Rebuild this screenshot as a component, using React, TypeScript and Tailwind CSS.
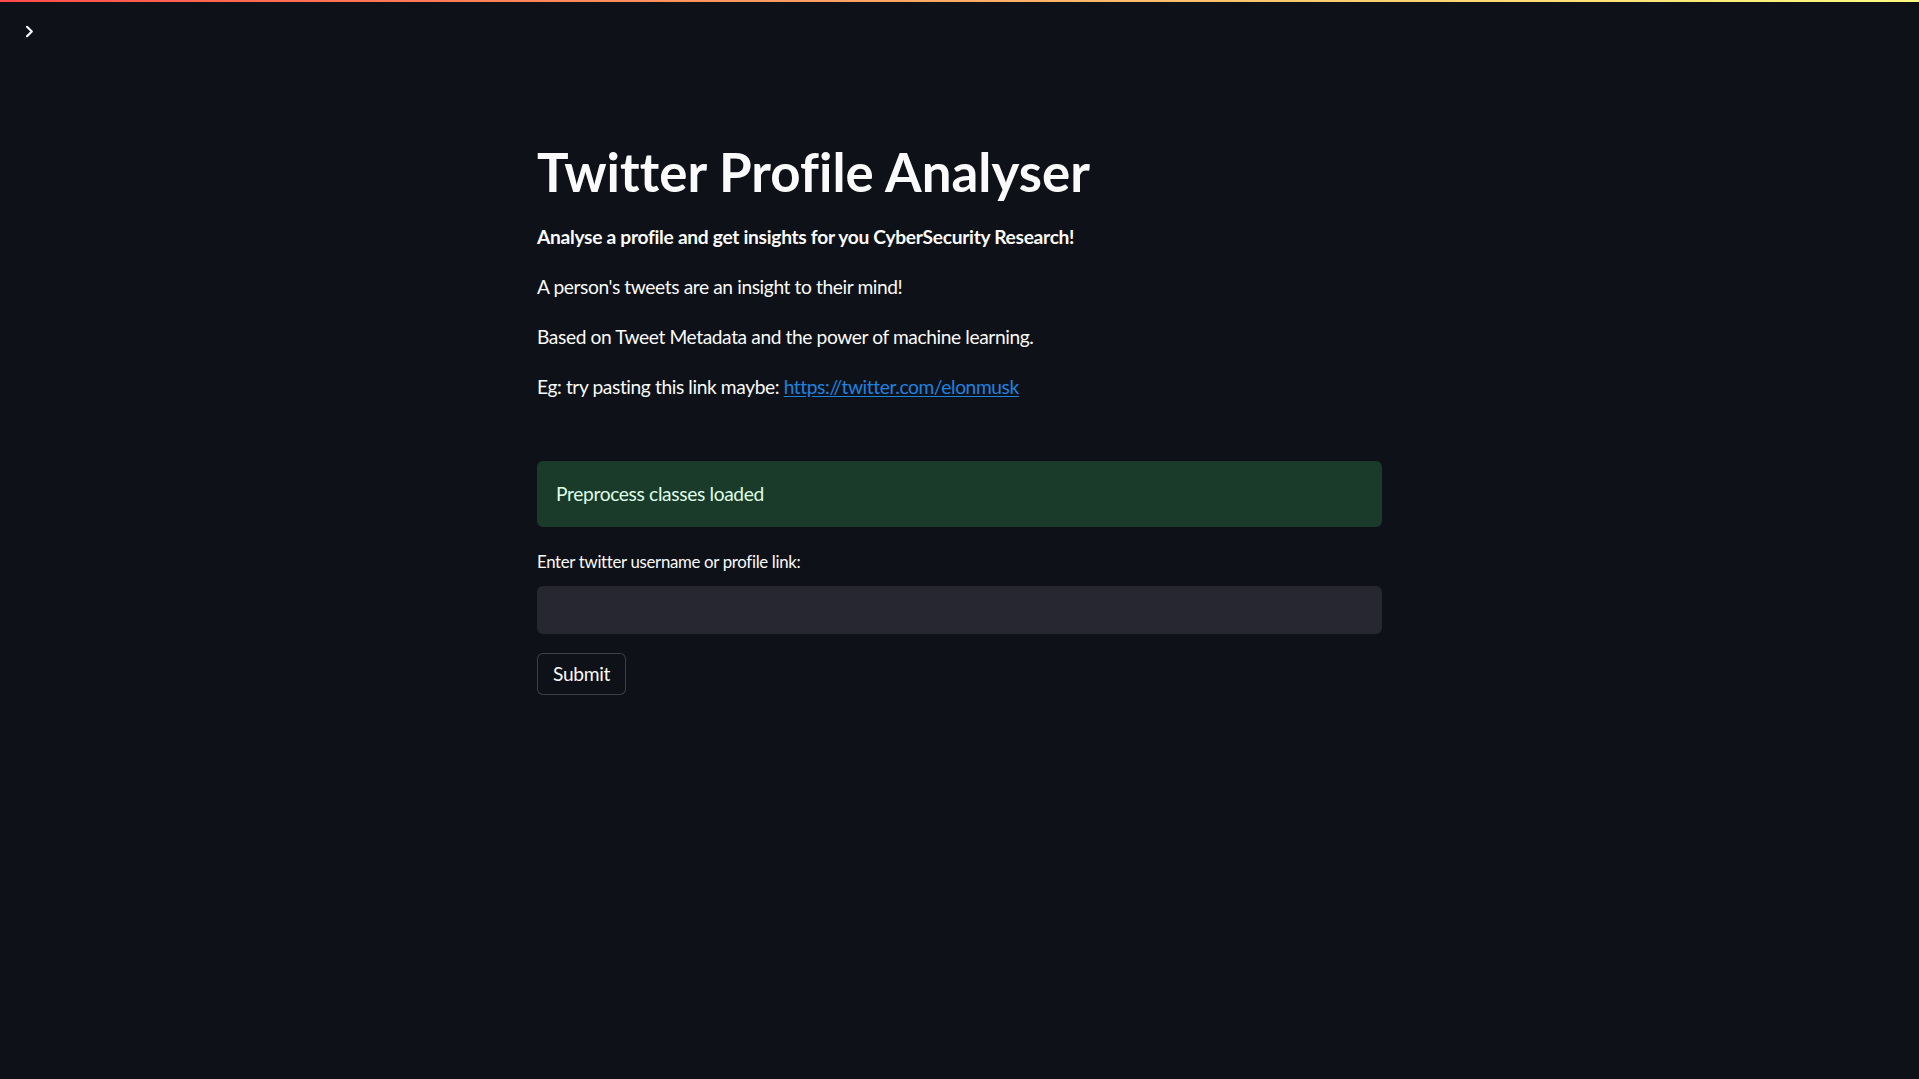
import React, { useState } from "react";

const font = { fontFamily: '"Lato", "Noto Sans", sans-serif' };

const App = () => {
  const [value, setValue] = useState("");

  return (
    <div className="min-h-screen w-full bg-[#0e1117] text-[#fafafa] relative" style={font}>
      <div className="h-[2px] w-full bg-gradient-to-r from-[#ff4b4b] to-[#fffd80]" />

      {/* collapsed sidebar toggle */}
      <button className="absolute left-[20px] top-[22px] w-[18px] h-[18px] flex items-center justify-center text-[#fafafa]">
        <svg width="9" height="13" viewBox="0 0 9 13" fill="none">
          <path d="M2 1.8 L6.8 6.5 L2 11.2" stroke="currentColor" strokeWidth="2.2" strokeLinecap="round" strokeLinejoin="round" />
        </svg>
      </button>

      <main className="w-[845px] mx-auto pt-[138px] pb-40">
        <h1 className="text-[52.8px] leading-[63px] font-bold tracking-[0.05px]">Twitter Profile Analyser</h1>

        <div className="mt-[18px] text-[19.2px] leading-[31px]">
          <p className="font-bold mb-[19px] tracking-[-0.3px]">
            Analyse a profile and get insights for you CyberSecurity Research!
          </p>
          <div className="tracking-[-0.4px]">
            <p className="mb-[19px]">A person's tweets are an insight to their mind!</p>
            <p className="mb-[19px]">Based on Tweet Metadata and the power of machine learning.</p>
            <p>
              Eg: try pasting this link maybe:{" "}
              <a href="#" className="text-[#1c83e1] underline underline-offset-2">
                https://twitter.com/elonmusk
              </a>
            </p>
          </div>
        </div>

        <div className="mt-[59px] h-[66px] rounded-[6px] bg-[#1a3a2a] px-[19px] flex items-center">
          <span className="text-[19.2px] text-[#dffde9] tracking-[-0.35px]">Preprocess classes loaded</span>
        </div>

        <label htmlFor="username" className="block mt-[24px] text-[16.8px] leading-[22px] text-[#fafafa] tracking-[-0.3px]">
          Enter twitter username or profile link:
        </label>
        <input
          id="username"
          type="text"
          value={value}
          onChange={(e) => setValue(e.target.value)}
          className="mt-[13px] w-full h-[48px] rounded-[6px] bg-[#262730] px-[14px] text-[19.2px] text-[#fafafa] outline-none"
        />

        <button className="mt-[19px] h-[42px] px-[15px] rounded-[6px] border border-[rgba(250,250,250,0.2)] bg-[#0e1117] text-[19.2px] text-[#fafafa] tracking-[-0.3px]">
          Submit
        </button>
      </main>
    </div>
  );
};

export default App;
